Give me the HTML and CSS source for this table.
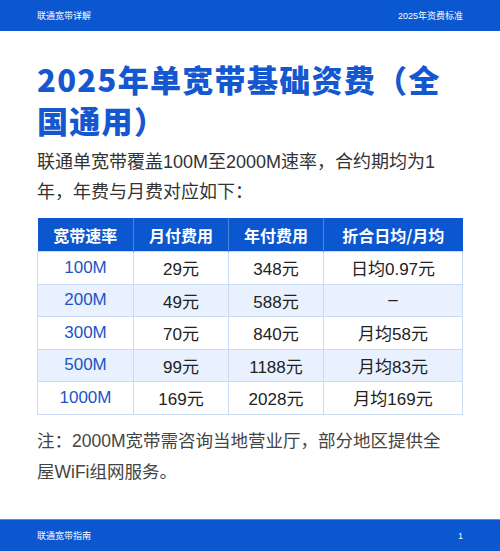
FILE: index.html
```html
<!DOCTYPE html>
<html lang="zh-CN">
  <head>
    <meta charset="UTF-8" />
    <meta name="viewport" content="width=device-width, initial-scale=1.0" />
    <title>联通宽带详解</title>
    <link rel="stylesheet" href="styles.css">
  </head>

  <body>
    <div class="page">
      <div class="topbar">
        <div class="topbar-left">联通宽带详解</div>
        <div class="topbar-right">2025年资费标准</div>
      </div>

      <div class="content">
        <h1 class="title">2025年单宽带基础资费（全<br />国通用）</h1>
        <p class="intro">联通单宽带覆盖100M至2000M速率，合约期均为1<br />年，年费与月费对应如下：</p>

        <table class="price-table">
          <colgroup>
            <col class="col-speed" />
            <col class="col-month" />
            <col class="col-year" />
            <col class="col-avg" />
          </colgroup>
          <thead>
            <tr>
              <th>宽带速率</th>
              <th>月付费用</th>
              <th>年付费用</th>
              <th>折合日均/月均</th>
            </tr>
          </thead>
          <tbody>
            <tr>
              <td class="speed">100M</td>
              <td>29元</td>
              <td>348元</td>
              <td>日均0.97元</td>
            </tr>
            <tr>
              <td class="speed">200M</td>
              <td>49元</td>
              <td>588元</td>
              <td>–</td>
            </tr>
            <tr>
              <td class="speed">300M</td>
              <td>70元</td>
              <td>840元</td>
              <td>月均58元</td>
            </tr>
            <tr>
              <td class="speed">500M</td>
              <td>99元</td>
              <td>1188元</td>
              <td>月均83元</td>
            </tr>
            <tr>
              <td class="speed">1000M</td>
              <td>169元</td>
              <td>2028元</td>
              <td>月均169元</td>
            </tr>
          </tbody>
        </table>

        <p class="note">注：2000M宽带需咨询当地营业厅，部分地区提供全<br />屋WiFi组网服务。</p>
      </div>

      <div class="footer">
        <div class="footer-left">联通宽带指南</div>
        <div class="footer-right">1</div>
      </div>
    </div>
  </body>
</html>
```

FILE: styles.css
```css
body {
  margin: 0;
  font-family: "Liberation Sans", "Noto Sans CJK SC", sans-serif;
  background-color: #ffffff;
}
.page {
  width: 500px;
  height: 551px;
  display: flex;
  flex-direction: column;
  overflow: hidden;
}

.topbar,
.footer {
  display: flex;
  justify-content: space-between;
  align-items: center;
  background-color: #0b57d0;
  color: #ffffff;
  font-size: 9px;
  padding: 0 37px;
}
.topbar {
  height: 31px;
}
.footer {
  height: 31px;
  margin-top: auto;
  border-top: 1px solid #5a8fe0;
}

.content {
  padding: 0 37px;
}

.title {
  margin: 27px 0 0 0;
  font-family: "Noto Sans CJK SC", sans-serif;
  font-weight: 900;
  font-size: 31px;
  line-height: 41px;
  color: #1557cf;
  letter-spacing: 1.3px;
}

.intro {
  margin: 7px 0 0 0;
  font-size: 18px;
  line-height: 30px;
  color: #333333;
}

.price-table {
  margin-top: 11px;
  width: 425px;
  table-layout: fixed;
  border-collapse: collapse;
  text-align: center;
}
.col-speed { width: 96px; }
.col-month { width: 95px; }
.col-year { width: 95px; }
.col-avg { width: 139px; }

.price-table th {
  background-color: #0b57d0;
  color: #ffffff;
  font-family: "Noto Sans CJK SC", sans-serif;
  font-weight: bold;
  font-size: 16px;
  height: 33px;
  padding: 0;
  border-left: 1px solid #4a82dc;
}
.price-table th:first-child {
  border-left: none;
}

.price-table td {
  height: 31.5px;
  padding: 0;
  font-size: 17px;
  color: #222222;
  border: 1px solid #c9dcf4;
}
.price-table tbody tr:nth-child(even) td {
  background-color: #e8f1fd;
}
.price-table td.speed {
  color: #1a55c6;
}

.note {
  margin: 11px 0 0 0;
  font-size: 17.5px;
  line-height: 31px;
  color: #444444;
}
```
